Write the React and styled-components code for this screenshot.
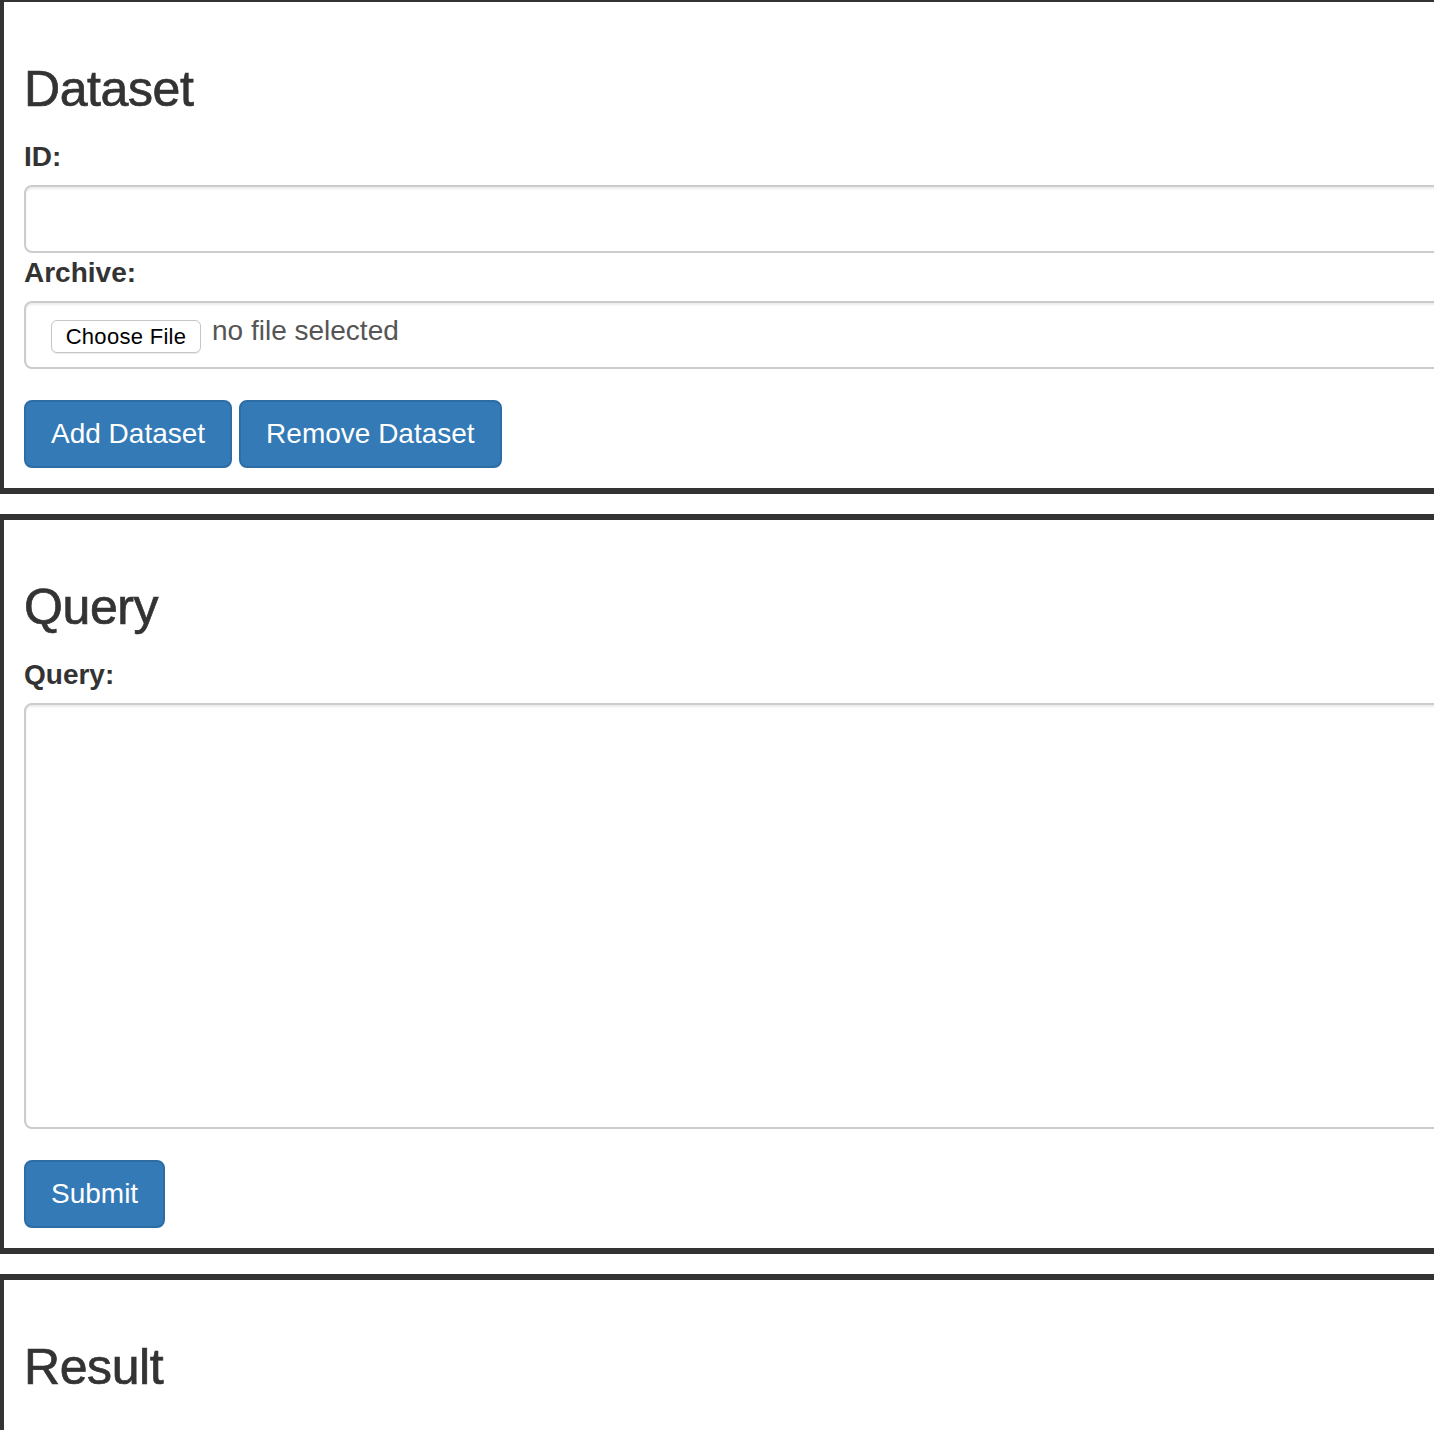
import React from "react";
import styled, { createGlobalStyle } from "styled-components";

const GlobalStyle = createGlobalStyle`
  html, body {
    margin: 0;
    padding: 0;
    background: #fff;
    overflow: hidden;
  }
  body {
    font-family: "Liberation Sans", Arial, Helvetica, sans-serif;
    color: #333;
  }
  * { box-sizing: border-box; }
`;

const Page = styled.div`
  margin: -4px 0 0 -2px;
  width: 1520px;
  display: flex;
  flex-direction: column;
  gap: 20px;
`;

const Panel = styled.section`
  border: 6px solid #333;
  padding: 20px;
  display: flex;
  flex-direction: column;
  align-items: flex-start;
`;

const Heading = styled.h3`
  margin: 40px 0 20px;
  font-size: 50px;
  line-height: 55px;
  font-weight: 500;
  color: #333;
  letter-spacing: -0.4px;
  -webkit-text-stroke: 0.7px #333;
`;

const Label = styled.label`
  display: block;
  font-size: 28px;
  line-height: 40px;
  font-weight: 700;
  color: #333;
  margin-bottom: 8px;
`;

const TextInput = styled.input`
  display: block;
  width: 100%;
  height: 68px;
  padding: 12px 24px;
  font-size: 28px;
  line-height: 40px;
  color: #555;
  background: #fff;
  border: 2px solid #ccc;
  border-radius: 8px;
  box-shadow: inset 0 2px 2px rgba(0, 0, 0, 0.075);
  font-family: inherit;
  outline: none;
`;

const FileBox = styled.div`
  display: flex;
  align-items: flex-start;
  width: 100%;
  height: 68px;
  padding: 12px 25px;
  border: 2px solid #ccc;
  border-radius: 8px;
  box-shadow: inset 0 2px 2px rgba(0, 0, 0, 0.075);
  background: #fff;
`;

const ChooseButton = styled.span`
  display: inline-flex;
  align-items: center;
  justify-content: center;
  margin-top: 5px;
  width: 150px;
  height: 33px;
  border: 1px solid #c6c6c6;
  border-radius: 6px;
  background: #fff;
  color: #000;
  font-size: 22px;
  letter-spacing: 0.3px;
  box-shadow: 0 1px 1px rgba(0, 0, 0, 0.08);
`;

const FileStatus = styled.span`
  margin-left: 11px;
  font-size: 28px;
  line-height: 32px;
  color: #555;
`;

const TextArea = styled.textarea`
  display: block;
  width: 100%;
  height: 426px;
  padding: 12px 24px;
  font-size: 28px;
  line-height: 40px;
  color: #555;
  background: #fff;
  border: 2px solid #ccc;
  border-radius: 8px;
  box-shadow: inset 0 2px 2px rgba(0, 0, 0, 0.075);
  font-family: inherit;
  resize: none;
  outline: none;
`;

const ButtonRow = styled.div`
  display: flex;
  gap: 7px;
  margin-top: 31px;
`;

const Button = styled.button`
  height: 68px;
  padding: 0 25px;
  font-family: inherit;
  font-size: 28px;
  line-height: 40px;
  color: #fff;
  background: #337ab7;
  border: 2px solid #2e6da4;
  border-radius: 8px;
  cursor: pointer;
`;

export default function App() {
  return (
    <>
      <GlobalStyle />
      <Page>
        <Panel>
          <Heading>Dataset</Heading>
          <Label htmlFor="dataset-id">ID:</Label>
          <TextInput id="dataset-id" type="text" />
          <Label>Archive:</Label>
          <FileBox>
            <ChooseButton>Choose File</ChooseButton>
            <FileStatus>no file selected</FileStatus>
          </FileBox>
          <ButtonRow>
            <Button>Add Dataset</Button>
            <Button>Remove Dataset</Button>
          </ButtonRow>
        </Panel>
        <Panel>
          <Heading>Query</Heading>
          <Label htmlFor="query">Query:</Label>
          <TextArea id="query" />
          <ButtonRow>
            <Button>Submit</Button>
          </ButtonRow>
        </Panel>
        <Panel>
          <Heading>Result</Heading>
        </Panel>
      </Page>
    </>
  );
}
